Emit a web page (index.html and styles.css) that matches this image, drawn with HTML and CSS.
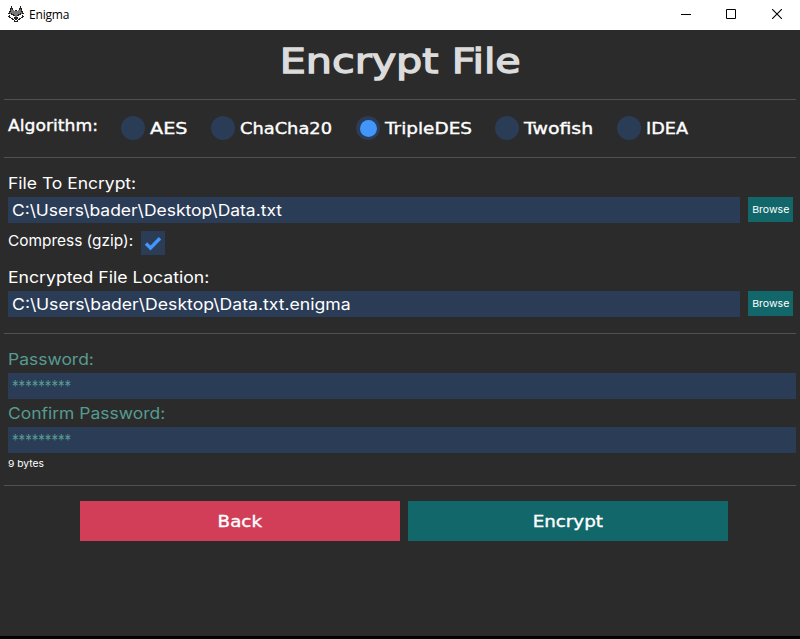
FILE: index.html
```html
<!DOCTYPE html>
<html lang="en">
<head>
<meta charset="utf-8">
<title>Enigma</title>
<link rel="stylesheet" href="styles.css">
</head>
<body>
<header class="titlebar">
  <svg class="logo" width="16" height="16" viewBox="0 0 16 16" shape-rendering="crispEdges">
    <path fill="#777" d="M3 2h1v2h2v1h4V4h2V2h1v4h1v2h-2v1h-2v1H9v2H7v-2H6V9H4V8H2V6h1z"/>
    <path fill="#222" d="M3 0h1v2h1v2H4V3H3v3H2V2h1zM12 0h1v2h1v4h-1V3h-1v1h-1V2h1zM1 5h1v2H1zM14 5h1v2h-1zM0 7h2v1H0zM14 7h2v1h-2zM7 4h2v1H7zM3 7h1v1h2v1h1v1H5V9H3zM12 7h1v2h-2v1H9V9h1V8h2zM1 9h1v1H1zM14 9h1v1h-1zM0 10h2v1H0zM14 10h2v1h-2zM1 11h2v1H1zM13 11h2v1h-2zM3 12h2v1H3zM11 12h2v1h-2zM4 13h2v1H4zM10 13h2v1h-2zM6 11h4v2H9v1H7v-1H6zM6 14h1v1H6zM9 14h1v1H9zM6 15h4v1H6z"/>
  </svg>
  <span class="app-name">Enigma</span>
  <div class="controls">
    <svg width="10" height="10"><path d="M0 5.5h10" stroke="#000"/></svg>
    <svg width="10" height="10"><path d="M.5.5h9v9h-9z" fill="none" stroke="#000"/></svg>
    <svg width="10" height="10"><path d="M0 0l10 10M10 0L0 10" stroke="#000" stroke-width="1.1"/></svg>
  </div>
</header>
<main class="panel">
  <h1 class="title"><span>Encrypt File</span></h1>
  <section class="algorithms">
    <span class="algo-label"><span>Algorithm:</span></span>
    <label class="option aes"><i class="radio"></i><span>AES</span></label>
    <label class="option chacha"><i class="radio"></i><span>ChaCha20</span></label>
    <label class="option triple"><i class="radio selected"></i><span>TripleDES</span></label>
    <label class="option twofish"><i class="radio"></i><span>Twofish</span></label>
    <label class="option idea"><i class="radio"></i><span>IDEA</span></label>
  </section>
  <section class="files">
    <div class="label l-file"><span>File To Encrypt:</span></div>
    <div class="row"><div class="field"><span class="p-in">C:\Users\bader\Desktop\Data.txt</span></div><button class="browse"><span>Browse</span></button></div>
    <div class="compress"><div class="l-comp"><span>Compress (gzip):</span></div>
      <svg class="check" width="24" height="24" viewBox="0 0 24 24"><path d="M5 12.5l4.5 4.5L19 7.3" fill="none" stroke="#4296fa" stroke-width="3.4"/></svg>
    </div>
    <div class="label l-loc"><span>Encrypted File Location:</span></div>
    <div class="row"><div class="field"><span class="p-out">C:\Users\bader\Desktop\Data.txt.enigma</span></div><button class="browse"><span>Browse</span></button></div>
  </section>
  <section class="passwords">
    <div class="label l-pass"><span>Password:</span></div>
    <div class="field secret"><span>*********</span></div>
    <div class="label l-conf"><span>Confirm Password:</span></div>
    <div class="field secret"><span>*********</span></div>
    <div class="bytes"><span>9 bytes</span></div>
  </section>
  <footer class="actions">
    <button class="back"><span>Back</span></button>
    <button class="encrypt"><span>Encrypt</span></button>
  </footer>
</main>
</body>
</html>
```
FILE: styles.css
```css
* { box-sizing: border-box; }
body { margin: 0; width: 800px; height: 639px; overflow: hidden; background: #2b2b2b; color: #fff; font: 16px/20px Inter, "Liberation Sans", sans-serif; white-space: nowrap; display: flex; flex-direction: column; }
svg { display: block; }
button { border: 0; padding: 0; color: #fff; font: inherit; }
.panel span { display: inline-block; transform-origin: left center; }
.titlebar { height: 30px; background: #fff; color: #000; display: flex; align-items: center; padding: 0 18px 2px 8px; }
.app-name { margin: 2px 0 0 5px; font: 12px/16px "Open Sans", sans-serif; letter-spacing: -.2px; }
.controls { margin-left: auto; display: flex; gap: 36px; }
.controls svg:first-child { margin-right: -1px; }
.panel { flex: 1; padding: 0 4px; border-bottom: 3px solid #010105; }
.title { margin: 0; height: 70px; border-bottom: 1px solid #505057; padding-top: 11px; text-align: center; color: #dcdcdc; font: 34px/40px "DejaVu Sans", sans-serif; -webkit-text-stroke: 1.3px #dcdcdc; }
.panel .title span { transform: scaleX(1.215); transform-origin: center; }
.algorithms { height: 58px; border-bottom: 1px solid #505057; display: flex; padding: 16px 4px 0; font: 15.5px/26px "DejaVu Sans", sans-serif; -webkit-text-stroke: .35px #fff; }
.algo-label { width: 113px; line-height: 20px; }
.algo-label span { transform: scaleX(1.11); }
.option { display: flex; gap: 5px; }
.radio { width: 24px; height: 24px; border-radius: 50%; background: #2b3c57; display: flex; align-items: center; justify-content: center; }
.selected::after { content: ""; width: 17px; height: 17px; border-radius: 50%; background: #4296fa; }
.aes { width: 90px; }
.aes span { transform: scaleX(1.24); }
.chacha { width: 145px; }
.chacha span { transform: scaleX(1.15); }
.triple { width: 139px; }
.triple span { transform: scaleX(1.19); }
.twofish { width: 122px; }
.twofish span { transform: scaleX(1.22); }
.idea span { transform: scaleX(1.14); }
.files { height: 176px; border-bottom: 1px solid #505057; padding: 15px 0 0 4px; }
.label { height: 24px; }
.label span, .p-in, .p-out { transform: scaleX(1.092); }
.label.l-loc span, .p-out { transform: scaleX(1.102); }
.row { display: flex; gap: 8px; }
.field { width: 732px; height: 26px; padding-left: 4px; background: #2b3c57; line-height: 26px; }
.browse { width: 45px; height: 25px; background: #12676a; font-size: 9.5px; }
.panel .browse span { transform: scaleX(1.11); transform-origin: center; }
.compress { display: flex; gap: 8px; padding-top: 8px; height: 44px; }
.l-comp { width: 125px; font-size: 15px; }
.l-comp span { transform: scaleX(1.028); }
.check { background: #2b3c57; }
.passwords { height: 152px; border-bottom: 1px solid #505057; padding: 15px 0 0 4px; color: #569b90; }
.passwords .field { width: 788px; }
.secret span { transform: scaleX(.82); }
.l-conf { height: 28px; padding-top: 4px; }
.bytes { color: #fff; font-size: 9.5px; line-height: 22px; }
.bytes span { transform: scaleX(1.08); }
.actions { display: flex; gap: 8px; padding: 15px 0 0 76px; font: 15.5px "DejaVu Sans", sans-serif; -webkit-text-stroke: .35px #fff; }
.panel .actions span { transform: scaleX(1.18); transform-origin: center; }
.back, .encrypt { width: 320px; height: 40px; padding-top: 2px; }
.back { background: #d23d58; }
.encrypt { background: #12676a; }
```
